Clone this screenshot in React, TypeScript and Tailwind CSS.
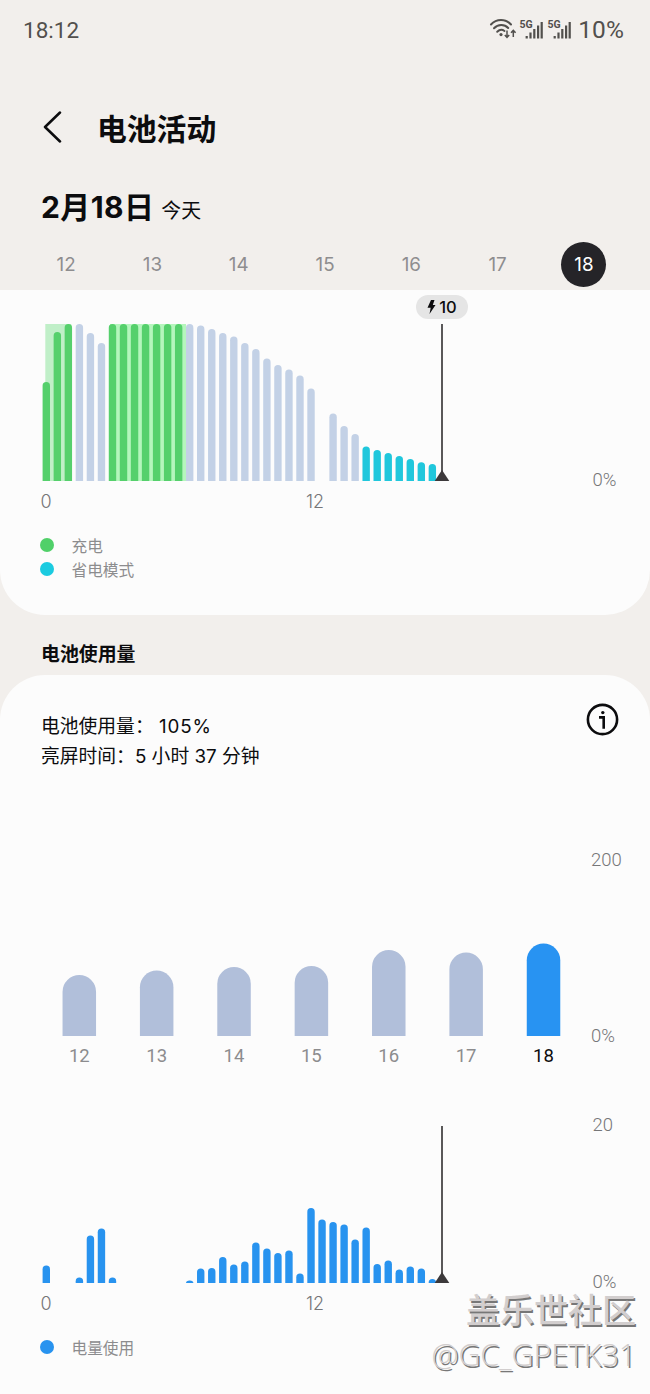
import React from 'react';

const FIRST_BAR = 46.3;
const BAR_STEP = 11.03;
const MARKER_X = 442;
const CHART_HEIGHT = 158;

const days = [12, 13, 14, 15, 16, 17, 18];

// Bar heights per half hour, 0 means no data
const levelBars = [
  99, 149, 157, 157, 148, 138, 157, 157, 157, 157, 157, 157, 157, 157, 155.5, 152, 148, 144.5,
  138, 132, 122.5, 116, 111.5, 105.5, 92.5, 0, 67.5, 55, 47, 34.5, 31, 28, 25, 22, 18.8, 17,
];

const usageBars = [
  17.5, 0, 0, 5.5, 47.5, 54.5, 5.5, 0, 0, 0, 0, 0, 0, 2.5, 14.5, 15, 26, 18.5, 21.5, 40.5, 34.5,
  30, 32.5, 9.5, 75, 63.5, 61, 58.5, 43.5, 55.5, 19, 22.5, 13.5, 16.5, 14.5, 4,
];

const dailyBars = [61, 65.5, 69, 70, 86, 83.5, 92.5];

const levelColor = (index: number) => {
  if (index <= 2 || (index >= 6 && index <= 12)) return '#55d06c';
  if (index >= 29) return '#20c7dc';
  return '#c3d1e6';
};

const barPath = (x: number, width: number, height: number, base: number) => {
  const r = width / 2;
  const ry = Math.min(r, height);
  return `M${x - r} ${base}V${base - height + ry}A${r} ${ry} 0 0 1 ${x + r} ${base - height + ry}V${base}Z`;
};

const HourBars: React.FC<{ values: number[]; color: (index: number) => string }> = ({ values, color }) => (
  <>
    {values.map((value, index) =>
      value > 0 ? (
        <path key={index} d={barPath(FIRST_BAR + index * BAR_STEP, 7.4, value, CHART_HEIGHT)} fill={color(index)} />
      ) : null
    )}
  </>
);

const Marker: React.FC = () => (
  <g fill="#3c393b">
    <rect x={MARKER_X - 1} y={1} width={2} height={CHART_HEIGHT - 1} fill="#5a5859" />
    <path d={`M${MARKER_X} ${CHART_HEIGHT - 11}L${MARKER_X + 7.3} ${CHART_HEIGHT}H${MARKER_X - 7.3}Z`} />
  </g>
);

const HourLabels: React.FC = () => (
  <div className="flex h-[40px] items-center pt-[2px] pl-[31px] font-['Inter',sans-serif] text-[18px] leading-none font-light text-[#767678]">
    <span className="w-[30px] text-center">0</span>
    <span className="ml-[239px] w-[30px] text-center">12</span>
  </div>
);

const LegendItem: React.FC<{ dot: string; label: string }> = ({ dot, label }) => (
  <div className="flex h-[24px] items-center pl-10">
    <span className={`size-[14px] rounded-full ${dot}`} />
    <span className="ml-[17.5px] pt-[3px] text-[15.7px] leading-none text-[#8c8c8e]">{label}</span>
  </div>
);

const StatusBar: React.FC = () => (
  <div className="flex h-[60px] items-center pr-[26px] pl-[23px] text-[#52504d]">
    <span className="text-[22.5px] leading-none">18:12</span>
    <svg className="ml-auto" width="86" height="26" viewBox="0 0 86 26" fill="none">
      <g stroke="currentColor" strokeWidth="2" strokeLinecap="round">
        <path d="M2 7.5C7.5 1.5 16.5 1.5 22 7.5" />
        <path d="M5 11.2C9 7 15.5 7 19.2 11" />
        <path d="M8.2 14.8C10.5 12.5 13.5 12.5 15.5 14" />
      </g>
      <circle cx="12" cy="17.6" r="1.6" fill="currentColor" />
      <path d="M18 13.5V20M15.8 18L18 20.4L20.2 18M24.3 20V13.5M22 15.8L24.3 13.4L26.6 15.8" stroke="currentColor" strokeWidth="1.5" />
      {[0, 28].map((x) => (
        <g key={x} fill="currentColor">
          <text x={x + 30.5} y="10.5" fontSize="10.5" fontWeight="700" fontFamily="Roboto, sans-serif">5G</text>
          <rect x={x + 36.6} y="19" width="2.2" height="2.5" />
          <rect x={x + 40.4} y="15.5" width="2.2" height="6" />
          <rect x={x + 44.2} y="12" width="2.2" height="9.5" />
          <rect x={x + 48} y="8.5" width="2.2" height="13" />
          <rect x={x + 51.6} y="5" width="2.2" height="16.5" />
        </g>
      ))}
    </svg>
    <span className="ml-[3px] text-[24.5px] leading-none tracking-[0.1px]">10%</span>
  </div>
);

const App: React.FC = () => {
  return (
    <div className="relative h-[1394px] w-[650px] overflow-hidden bg-[#f2efec] font-['Roboto','Noto_Sans_CJK_SC',sans-serif] text-[#0c0c0e]">
      <StatusBar />

      {/* Title */}
      <header className="flex h-[136px] items-center pl-[43px]">
        <svg width="20" height="34" viewBox="0 0 20 34" fill="none" stroke="currentColor" strokeWidth="2.5" strokeLinecap="round" strokeLinejoin="round">
          <path d="M17 1.5L2 16L17 30.5" />
        </svg>
        <h1 className="ml-[34px] pt-[3px] text-[29.8px] leading-none font-bold">电池活动</h1>
      </header>

      {/* Date and day picker */}
      <div className="-mt-[9px] flex h-[40px] items-baseline pl-[41px]">
        <span className="font-['Inter','Noto_Sans_CJK_SC',sans-serif] text-[30px] leading-[40px] font-bold tracking-[0.4px]">2月18日</span>
        <span className="ml-[7px] text-[19.9px] leading-[40px]">今天</span>
      </div>
      <div className="flex h-[63px] items-center pt-[12px] pl-[23px] font-['Inter',sans-serif] text-[18.8px] leading-none text-[#8e8d8f]">
        {days.map((day) => (
          <div key={day} className="flex w-[86.3px] justify-center">
            <span className={`flex size-[45px] items-center justify-center rounded-full pt-px ${day === 18 ? 'bg-[#252428] text-white' : ''}`}>
              {day}
            </span>
          </div>
        ))}
      </div>

      {/* Battery level */}
      <section className="h-[325px] rounded-b-[45px] bg-[#fcfcfc]">
        <div className="flex h-[33px] pt-[5px] pl-[416px]">
          <div className="flex h-[24px] w-[52px] items-center justify-center gap-[3px] rounded-full bg-[#e5e5e5]">
            <svg width="9" height="14" viewBox="0 0 9 14" fill="currentColor">
              <path d="M4 0H7.5L5.8 5H8.5L2.5 14L3.7 7.8H0.5Z" />
            </svg>
            <span className="pt-px font-['Inter',sans-serif] text-[16.5px] leading-none font-medium">10</span>
          </div>
        </div>
        <div className="flex items-end">
          <svg width="580" height={CHART_HEIGHT} viewBox={`0 0 580 ${CHART_HEIGHT}`}>
            <rect x="45.3" y="1" width="26" height="157" fill="#c0efc8" />
            <rect x="110" y="1" width="76" height="157" fill="#b5f6bd" />
            <HourBars values={levelBars} color={levelColor} />
            <Marker />
          </svg>
          <span className="-mb-[9px] ml-[12.5px] text-[18.5px] leading-5 font-light text-[#767678]">0%</span>
        </div>
        <HourLabels />
        <div className="pt-[12px]">
          <LegendItem dot="bg-[#50d069]" label="充电" />
          <LegendItem dot="bg-[#1bcbe0]" label="省电模式" />
        </div>
      </section>

      <h2 className="flex h-[60px] items-center pt-[20px] pl-[41px] text-[18.9px] leading-none font-bold">电池使用量</h2>

      {/* Battery usage */}
      <section className="h-[719px] rounded-t-[45px] bg-[#fcfcfc]">
        <div className="flex justify-between pt-[28px] pr-[31px] pl-[41px]">
          <div className="pt-[9px] font-['Inter','Noto_Sans_CJK_SC',sans-serif] text-[18.8px] leading-[30px]">
            <p>电池使用量： <span className="tracking-[0.9px]">105%</span></p>
            <p>亮屏时间：5 小时 37 分钟</p>
          </div>
          <svg width="33" height="33" viewBox="0 0 33 33" fill="none" stroke="currentColor" strokeWidth="2.6">
            <circle cx="16.5" cy="16.5" r="14.6" />
            <path d="M13 14.4H17.7V25.8" />
            <circle cx="16.8" cy="9.6" r="1.7" fill="currentColor" stroke="none" />
          </svg>
        </div>

        {/* Daily usage */}
        <div className="mt-[78px] flex h-[186px]">
          <svg width="580" height="186" viewBox="0 0 580 186">
            {dailyBars.map((height, index) => (
              <path
                key={days[index]}
                d={barPath(79.3 + index * 77.37, 33.5, height, 186)}
                fill={index === dailyBars.length - 1 ? '#2893f2' : '#b1bfda'}
              />
            ))}
          </svg>
          <div className="-mb-[10px] ml-[11px] flex flex-col justify-between text-[18.5px] leading-5 font-light text-[#767678]">
            <span>200</span>
            <span>0%</span>
          </div>
        </div>
        <div className="flex h-[38px] items-center pt-[2px] pl-[40.6px] text-[18.5px] leading-none text-[#8c8c8e]">
          {days.map((day) => (
            <span key={day} className={`w-[77.37px] text-center ${day === 18 ? 'text-[#0c0c0e]' : ''}`}>{day}</span>
          ))}
        </div>

        {/* Hourly usage */}
        <div className="mt-[51px] flex">
          <svg width="580" height={CHART_HEIGHT} viewBox={`0 0 580 ${CHART_HEIGHT}`}>
            <HourBars values={usageBars} color={() => '#2893ef'} />
            <Marker />
          </svg>
          <div className="-mt-[10px] -mb-[9px] ml-[12.5px] flex flex-col justify-between text-[18.5px] leading-5 font-light text-[#767678]">
            <span>20</span>
            <span>0%</span>
          </div>
        </div>
        <HourLabels />
        <div className="pt-[12px]">
          <LegendItem dot="bg-[#2893ef]" label="电量使用" />
        </div>
      </section>

      {/* Watermark */}
      <div className="absolute right-[14px] bottom-[17px] text-right whitespace-nowrap text-[#d2cece] [text-shadow:1.5px_1.5px_0_#777]">
        <p className="text-[34px] leading-[34px] font-medium">盖乐世社区</p>
        <p className="mt-[4px] font-['Open_Sans',sans-serif] text-[30.3px] leading-[45px] font-light">@GC_GPETK31</p>
      </div>
    </div>
  );
};

export default App;
